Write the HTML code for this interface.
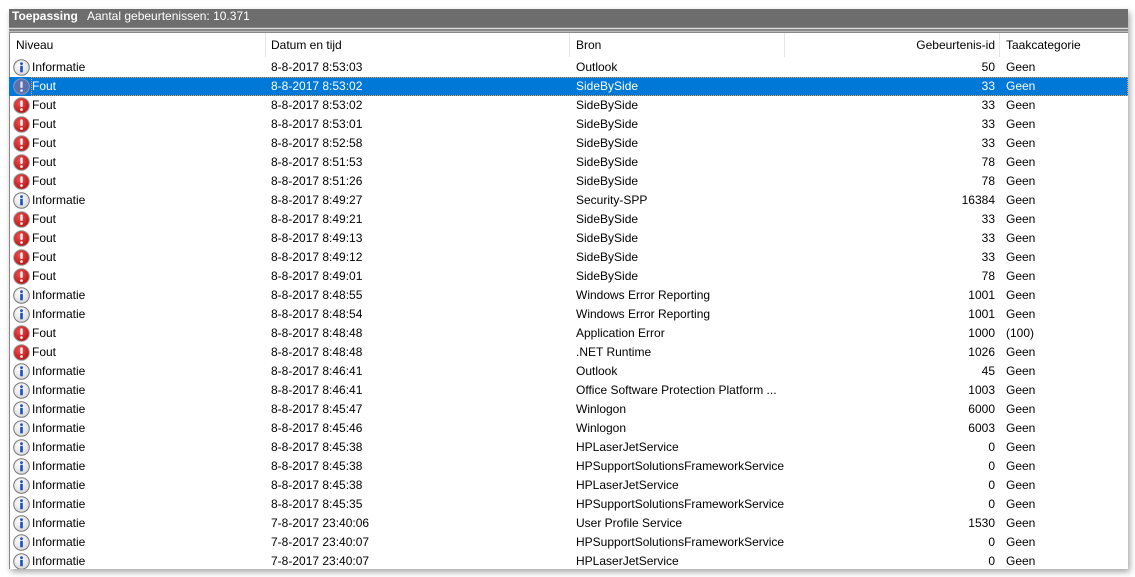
<!DOCTYPE html>
<html><head><meta charset="utf-8"><style>
html,body{margin:0;width:1135px;height:577px;overflow:hidden}
body{background:#fff;font-family:"Liberation Sans",sans-serif;font-size:12px;color:#000;position:relative}
.win{position:absolute;left:9px;top:9px;width:1119px;height:560px;background:#fff;box-shadow:2px 3px 6px rgba(0,0,0,.35);overflow:hidden}
.title{position:absolute;left:0;top:0;width:1119px;height:18px;background:#6d6d6d;color:#fff;font-size:12px;line-height:15px}
.title b{position:absolute;left:3px}
.title span{position:absolute;left:78px}
.l1{position:absolute;left:0;top:18px;width:1119px;height:6px;background:#888}
.l1:before{content:"";position:absolute;left:0;top:1px;width:100%;height:1px;background:#ddd}
.l1:after{content:"";position:absolute;left:0;top:4px;width:100%;height:1px;background:#bbb}
.lb{position:absolute;left:0;top:24px;width:1px;height:536px;background:#888}
.hdr{position:absolute;top:24px;left:0;height:24px;width:1119px}
.hdr div{position:absolute;top:5px}
.sep{position:absolute;top:0;width:1px;height:24px;background:#e5e5e5}
.rows{position:absolute;left:0;top:1px;width:1119px;height:559px;overflow:hidden}
.row{position:absolute;left:0;width:1119px;height:19px;line-height:19px}
.row div{position:absolute;top:0;white-space:nowrap}
.row svg{position:absolute;left:4px;top:1px}
.sel{background:#0078d7;color:#fff}
.sel .bar{position:absolute;left:22px;right:0;top:0;bottom:0;outline:1px dotted #f0a040;outline-offset:-1px}
.c1{left:23px}.c2{left:262px}.c3{left:567px}.c4{right:133px;text-align:right}.c5{left:997px}
.last{height:17px}
</style></head><body>
<svg width="0" height="0" style="position:absolute">
<defs>
<radialGradient id="gi" cx=".4" cy=".35" r=".7"><stop offset="0" stop-color="#fff"/><stop offset="1" stop-color="#d8d8d8"/></radialGradient>
<radialGradient id="ge" cx=".4" cy=".35" r=".7"><stop offset="0" stop-color="#f05050"/><stop offset="1" stop-color="#b01010"/></radialGradient>
<symbol id="inf" viewBox="0 0 17 17"><circle cx="8.5" cy="8.5" r="7.8" fill="url(#gi)" stroke="#777" stroke-width="1"/><circle cx="8.5" cy="4.6" r="1.4" fill="#1a4fbf"/><rect x="7.2" y="6.8" width="2.6" height="6.5" fill="#1a4fbf"/></symbol>
<symbol id="err" viewBox="0 0 17 17"><circle cx="8.5" cy="8.5" r="7.8" fill="url(#ge)" stroke="#999" stroke-width="1"/><rect x="7.3" y="3.4" width="2.4" height="6.6" rx="1" fill="#fff"/><circle cx="8.5" cy="12.6" r="1.3" fill="#fff"/></symbol>
<symbol id="errs" viewBox="0 0 17 17"><circle cx="8.5" cy="8.5" r="7.8" fill="#5b6fa8" stroke="#8896c0" stroke-width="1"/><rect x="7.3" y="3.4" width="2.4" height="6.6" rx="1" fill="#dfe4f5"/><circle cx="8.5" cy="12.6" r="1.3" fill="#dfe4f5"/></symbol>
</defs></svg>
<div class="win">
<div class="title"><b>Toepassing</b><span>Aantal gebeurtenissen: 10.371</span></div>
<div class="l1"></div>
<div class="hdr"><div style="left:7px">Niveau</div><div style="left:262px">Datum en tijd</div><div style="left:567px">Bron</div><div style="right:133px">Gebeurtenis-id</div><div style="left:997px">Taakcategorie</div>
<span class="sep" style="left:256px"></span><span class="sep" style="left:560px"></span><span class="sep" style="left:775px"></span><span class="sep" style="left:990px"></span></div>
<div class="lb"></div>
<div class="rows">
<div class="row" style="top:48px"><svg width="17" height="17"><use href="#inf"/></svg><div class="c1">Informatie</div><div class="c2">8-8-2017 8:53:03</div><div class="c3">Outlook</div><div class="c4">50</div><div class="c5">Geen</div></div>
<div class="row sel" style="top:67px"><span class="bar"></span><svg width="17" height="17"><use href="#errs"/></svg><div class="c1">Fout</div><div class="c2">8-8-2017 8:53:02</div><div class="c3">SideBySide</div><div class="c4">33</div><div class="c5">Geen</div></div>
<div class="row" style="top:86px"><svg width="17" height="17"><use href="#err"/></svg><div class="c1">Fout</div><div class="c2">8-8-2017 8:53:02</div><div class="c3">SideBySide</div><div class="c4">33</div><div class="c5">Geen</div></div>
<div class="row" style="top:105px"><svg width="17" height="17"><use href="#err"/></svg><div class="c1">Fout</div><div class="c2">8-8-2017 8:53:01</div><div class="c3">SideBySide</div><div class="c4">33</div><div class="c5">Geen</div></div>
<div class="row" style="top:124px"><svg width="17" height="17"><use href="#err"/></svg><div class="c1">Fout</div><div class="c2">8-8-2017 8:52:58</div><div class="c3">SideBySide</div><div class="c4">33</div><div class="c5">Geen</div></div>
<div class="row" style="top:143px"><svg width="17" height="17"><use href="#err"/></svg><div class="c1">Fout</div><div class="c2">8-8-2017 8:51:53</div><div class="c3">SideBySide</div><div class="c4">78</div><div class="c5">Geen</div></div>
<div class="row" style="top:162px"><svg width="17" height="17"><use href="#err"/></svg><div class="c1">Fout</div><div class="c2">8-8-2017 8:51:26</div><div class="c3">SideBySide</div><div class="c4">78</div><div class="c5">Geen</div></div>
<div class="row" style="top:181px"><svg width="17" height="17"><use href="#inf"/></svg><div class="c1">Informatie</div><div class="c2">8-8-2017 8:49:27</div><div class="c3">Security-SPP</div><div class="c4">16384</div><div class="c5">Geen</div></div>
<div class="row" style="top:200px"><svg width="17" height="17"><use href="#err"/></svg><div class="c1">Fout</div><div class="c2">8-8-2017 8:49:21</div><div class="c3">SideBySide</div><div class="c4">33</div><div class="c5">Geen</div></div>
<div class="row" style="top:219px"><svg width="17" height="17"><use href="#err"/></svg><div class="c1">Fout</div><div class="c2">8-8-2017 8:49:13</div><div class="c3">SideBySide</div><div class="c4">33</div><div class="c5">Geen</div></div>
<div class="row" style="top:238px"><svg width="17" height="17"><use href="#err"/></svg><div class="c1">Fout</div><div class="c2">8-8-2017 8:49:12</div><div class="c3">SideBySide</div><div class="c4">33</div><div class="c5">Geen</div></div>
<div class="row" style="top:257px"><svg width="17" height="17"><use href="#err"/></svg><div class="c1">Fout</div><div class="c2">8-8-2017 8:49:01</div><div class="c3">SideBySide</div><div class="c4">78</div><div class="c5">Geen</div></div>
<div class="row" style="top:276px"><svg width="17" height="17"><use href="#inf"/></svg><div class="c1">Informatie</div><div class="c2">8-8-2017 8:48:55</div><div class="c3">Windows Error Reporting</div><div class="c4">1001</div><div class="c5">Geen</div></div>
<div class="row" style="top:295px"><svg width="17" height="17"><use href="#inf"/></svg><div class="c1">Informatie</div><div class="c2">8-8-2017 8:48:54</div><div class="c3">Windows Error Reporting</div><div class="c4">1001</div><div class="c5">Geen</div></div>
<div class="row" style="top:314px"><svg width="17" height="17"><use href="#err"/></svg><div class="c1">Fout</div><div class="c2">8-8-2017 8:48:48</div><div class="c3">Application Error</div><div class="c4">1000</div><div class="c5">(100)</div></div>
<div class="row" style="top:333px"><svg width="17" height="17"><use href="#err"/></svg><div class="c1">Fout</div><div class="c2">8-8-2017 8:48:48</div><div class="c3">.NET Runtime</div><div class="c4">1026</div><div class="c5">Geen</div></div>
<div class="row" style="top:352px"><svg width="17" height="17"><use href="#inf"/></svg><div class="c1">Informatie</div><div class="c2">8-8-2017 8:46:41</div><div class="c3">Outlook</div><div class="c4">45</div><div class="c5">Geen</div></div>
<div class="row" style="top:371px"><svg width="17" height="17"><use href="#inf"/></svg><div class="c1">Informatie</div><div class="c2">8-8-2017 8:46:41</div><div class="c3">Office Software Protection Platform ...</div><div class="c4">1003</div><div class="c5">Geen</div></div>
<div class="row" style="top:390px"><svg width="17" height="17"><use href="#inf"/></svg><div class="c1">Informatie</div><div class="c2">8-8-2017 8:45:47</div><div class="c3">Winlogon</div><div class="c4">6000</div><div class="c5">Geen</div></div>
<div class="row" style="top:409px"><svg width="17" height="17"><use href="#inf"/></svg><div class="c1">Informatie</div><div class="c2">8-8-2017 8:45:46</div><div class="c3">Winlogon</div><div class="c4">6003</div><div class="c5">Geen</div></div>
<div class="row" style="top:428px"><svg width="17" height="17"><use href="#inf"/></svg><div class="c1">Informatie</div><div class="c2">8-8-2017 8:45:38</div><div class="c3">HPLaserJetService</div><div class="c4">0</div><div class="c5">Geen</div></div>
<div class="row" style="top:447px"><svg width="17" height="17"><use href="#inf"/></svg><div class="c1">Informatie</div><div class="c2">8-8-2017 8:45:38</div><div class="c3">HPSupportSolutionsFrameworkService</div><div class="c4">0</div><div class="c5">Geen</div></div>
<div class="row" style="top:466px"><svg width="17" height="17"><use href="#inf"/></svg><div class="c1">Informatie</div><div class="c2">8-8-2017 8:45:38</div><div class="c3">HPLaserJetService</div><div class="c4">0</div><div class="c5">Geen</div></div>
<div class="row" style="top:485px"><svg width="17" height="17"><use href="#inf"/></svg><div class="c1">Informatie</div><div class="c2">8-8-2017 8:45:35</div><div class="c3">HPSupportSolutionsFrameworkService</div><div class="c4">0</div><div class="c5">Geen</div></div>
<div class="row" style="top:504px"><svg width="17" height="17"><use href="#inf"/></svg><div class="c1">Informatie</div><div class="c2">7-8-2017 23:40:06</div><div class="c3">User Profile Service</div><div class="c4">1530</div><div class="c5">Geen</div></div>
<div class="row" style="top:523px"><svg width="17" height="17"><use href="#inf"/></svg><div class="c1">Informatie</div><div class="c2">7-8-2017 23:40:07</div><div class="c3">HPSupportSolutionsFrameworkService</div><div class="c4">0</div><div class="c5">Geen</div></div>
<div class="row last" style="top:542px"><svg width="17" height="17"><use href="#inf"/></svg><div class="c1">Informatie</div><div class="c2">7-8-2017 23:40:07</div><div class="c3">HPLaserJetService</div><div class="c4">0</div><div class="c5">Geen</div></div>
</div>
</div>
</body></html>
